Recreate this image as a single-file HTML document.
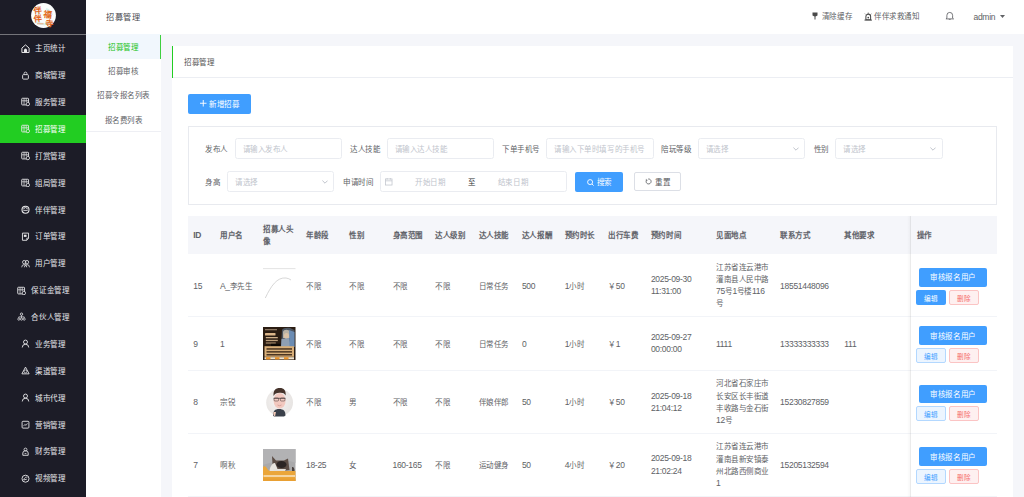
<!DOCTYPE html>
<html lang="zh-CN"><head><meta charset="utf-8"><title>招募管理</title>
<style>
html,body{margin:0;padding:0;}
body{width:1024px;height:497px;overflow:hidden;position:relative;background:#f5f6fa;font-family:"Liberation Sans", sans-serif;}
.r{position:absolute;}
.t{position:absolute;white-space:nowrap;letter-spacing:0.55px;}
.a{font-size:8.5px;letter-spacing:-0.3px;line-height:0;}
</style></head><body>
<div class="r" style="left:0.00px;top:0.00px;width:86.00px;height:497.00px;background:#1c1c27"></div>
<svg class="r" style="left:31px;top:2.6px" width="25" height="25" viewBox="0 0 25 25">
<circle cx="12.5" cy="12.5" r="12.4" fill="#fbfdfd"/>
<path d="M4 9 C6 8 8 10 9 12 M15 6 C18 7 20 9 21 12 M5 19 C9 21 14 22 19 20" stroke="#d9f1ef" stroke-width="2.2" fill="none"/>
<text x="2.2" y="10.2" font-size="8.2" fill="#e2671c" font-weight="bold" transform="rotate(-8 6 7)">伴</text>
<text x="2.8" y="18.6" font-size="8.2" fill="#e2671c" font-weight="bold" transform="rotate(-6 6 15)">伴</text>
<text x="12.6" y="14.2" font-size="8.6" fill="#e06a20" font-weight="bold" transform="rotate(8 16 11)">福</text>
<text x="14.4" y="23.6" font-size="8.2" fill="#e06a20" font-weight="bold" transform="rotate(6 18 20)">寺</text>
<path d="M6 20.8 H12.5" stroke="#f0a070" stroke-width="0.9"/>
</svg>
<div class="r" style="left:0.00px;top:34.30px;width:86.00px;height:1.00px;background:#74747a"></div>
<svg class="r" style="left:21.20px;top:43.70px" width="9" height="9.4" viewBox="0 0 10 10"><path d="M1 4.3 L5 0.8 L9 4.3 V9.2 H1 Z" fill="none" stroke="#e8e8ea" stroke-width="1.1" stroke-linejoin="round"/><path d="M3.3 9.2 V6.6 a1.7 1.7 0 0 1 3.4 0 V9.2 Z" fill="#e8e8ea"/></svg>
<div class="t" style="left:35.20px;top:44.25px;font-size:7.5px;line-height:10.5px;color:#e6e6ea;font-weight:normal;">主页统计</div>
<svg class="r" style="left:21.20px;top:70.58px" width="9" height="9.4" viewBox="0 0 10 10"><rect x="1.8" y="3.8" width="6.4" height="5" rx="1" fill="none" stroke="#e8e8ea" stroke-width="1"/><path d="M3.4 3.8 V2.6 a1.6 1.6 0 0 1 3.2 0 V3.8" fill="none" stroke="#e8e8ea" stroke-width="0.9"/></svg>
<div class="t" style="left:35.20px;top:71.12px;font-size:7.5px;line-height:10.5px;color:#e6e6ea;font-weight:normal;">商城管理</div>
<svg class="r" style="left:21.20px;top:97.45px" width="9" height="9.4" viewBox="0 0 10 10"><rect x="0.8" y="1.2" width="7.6" height="7.4" rx="0.8" fill="none" stroke="#e8e8ea" stroke-width="1"/><path d="M3.4 1.5 V8.4 M5.8 1.5 V5.5 M1 4 H8" stroke="#e8e8ea" stroke-width="0.8"/><circle cx="7.6" cy="7.6" r="1.9" fill="#1c1c27" stroke="#e8e8ea" stroke-width="0.9"/></svg>
<div class="t" style="left:35.20px;top:98.00px;font-size:7.5px;line-height:10.5px;color:#e6e6ea;font-weight:normal;">服务管理</div>
<div class="r" style="left:0.00px;top:115.33px;width:86.00px;height:27.20px;background:#22cd22"></div>
<svg class="r" style="left:21.20px;top:124.33px" width="9" height="9.4" viewBox="0 0 10 10"><rect x="0.8" y="1.2" width="7.6" height="7.4" rx="0.8" fill="none" stroke="#e8e8ea" stroke-width="1"/><path d="M3.4 1.5 V8.4 M5.8 1.5 V5.5 M1 4 H8" stroke="#e8e8ea" stroke-width="0.8"/><circle cx="7.6" cy="7.6" r="1.9" fill="#22cd22" stroke="#e8e8ea" stroke-width="0.9"/></svg>
<div class="t" style="left:35.20px;top:124.88px;font-size:7.5px;line-height:10.5px;color:#ffffff;font-weight:normal;">招募管理</div>
<svg class="r" style="left:21.20px;top:151.20px" width="9" height="9.4" viewBox="0 0 10 10"><rect x="0.8" y="1.2" width="7.6" height="7.4" rx="0.8" fill="none" stroke="#e8e8ea" stroke-width="1"/><path d="M3.4 1.5 V8.4 M5.8 1.5 V5.5 M1 4 H8" stroke="#e8e8ea" stroke-width="0.8"/><circle cx="7.6" cy="7.6" r="1.9" fill="#1c1c27" stroke="#e8e8ea" stroke-width="0.9"/></svg>
<div class="t" style="left:35.20px;top:151.75px;font-size:7.5px;line-height:10.5px;color:#e6e6ea;font-weight:normal;">打赏管理</div>
<svg class="r" style="left:21.20px;top:178.08px" width="9" height="9.4" viewBox="0 0 10 10"><rect x="0.8" y="1.2" width="7.6" height="7.4" rx="0.8" fill="none" stroke="#e8e8ea" stroke-width="1"/><path d="M3.4 1.5 V8.4 M5.8 1.5 V5.5 M1 4 H8" stroke="#e8e8ea" stroke-width="0.8"/><circle cx="7.6" cy="7.6" r="1.9" fill="#1c1c27" stroke="#e8e8ea" stroke-width="0.9"/></svg>
<div class="t" style="left:35.20px;top:178.62px;font-size:7.5px;line-height:10.5px;color:#e6e6ea;font-weight:normal;">组局管理</div>
<svg class="r" style="left:21.20px;top:204.95px" width="9" height="9.4" viewBox="0 0 10 10"><circle cx="5" cy="5" r="3.9" fill="none" stroke="#e8e8ea" stroke-width="1.2"/><path d="M3 4.6 a2 2 0 0 1 4 0" fill="none" stroke="#e8e8ea" stroke-width="1"/><path d="M2.6 5.8 H7.4" stroke="#e8e8ea" stroke-width="0.9"/></svg>
<div class="t" style="left:35.20px;top:205.50px;font-size:7.5px;line-height:10.5px;color:#e6e6ea;font-weight:normal;">伴伴管理</div>
<svg class="r" style="left:21.20px;top:231.83px" width="9" height="9.4" viewBox="0 0 10 10"><path d="M1.6 1 H8.4 V6.6 L6.4 9 H1.6 Z" fill="none" stroke="#e8e8ea" stroke-width="1" stroke-linejoin="round"/><rect x="3.2" y="2.8" width="3" height="2.4" fill="#e8e8ea"/><path d="M6.4 9 V6.6 H8.4" fill="none" stroke="#e8e8ea" stroke-width="0.8"/></svg>
<div class="t" style="left:35.20px;top:232.38px;font-size:7.5px;line-height:10.5px;color:#e6e6ea;font-weight:normal;">订单管理</div>
<svg class="r" style="left:21.20px;top:258.70px" width="9" height="9.4" viewBox="0 0 10 10"><circle cx="3.6" cy="3.3" r="1.9" fill="none" stroke="#e8e8ea" stroke-width="0.9"/><circle cx="6.6" cy="3.3" r="1.9" fill="none" stroke="#e8e8ea" stroke-width="0.9"/><path d="M0.8 9 a2.8 3 0 0 1 5.6 0 M3.8 9 a2.8 3 0 0 1 5.6 0" fill="none" stroke="#e8e8ea" stroke-width="0.9"/></svg>
<div class="t" style="left:35.20px;top:259.25px;font-size:7.5px;line-height:10.5px;color:#e6e6ea;font-weight:normal;">用户管理</div>
<svg class="r" style="left:17.45px;top:285.57px" width="9" height="9.4" viewBox="0 0 10 10"><rect x="0.8" y="1.2" width="7.6" height="7.4" rx="0.8" fill="none" stroke="#e8e8ea" stroke-width="1"/><path d="M3.4 1.5 V8.4 M5.8 1.5 V5.5 M1 4 H8" stroke="#e8e8ea" stroke-width="0.8"/><circle cx="7.6" cy="7.6" r="1.9" fill="#1c1c27" stroke="#e8e8ea" stroke-width="0.9"/></svg>
<div class="t" style="left:31.45px;top:286.12px;font-size:7.5px;line-height:10.5px;color:#e6e6ea;font-weight:normal;">保证金管理</div>
<svg class="r" style="left:17.45px;top:312.45px" width="9" height="9.4" viewBox="0 0 10 10"><circle cx="5" cy="2.2" r="1.3" fill="none" stroke="#e8e8ea" stroke-width="0.9"/><path d="M5 3.5 V5.2 M2 5.2 H8 M2 5.2 V6.4 M8 5.2 V6.4 M5 5.2 V6.4" stroke="#e8e8ea" stroke-width="0.8"/><circle cx="2" cy="7.7" r="1.2" fill="none" stroke="#e8e8ea" stroke-width="0.8"/><circle cx="5" cy="7.7" r="1.2" fill="none" stroke="#e8e8ea" stroke-width="0.8"/><circle cx="8" cy="7.7" r="1.2" fill="none" stroke="#e8e8ea" stroke-width="0.8"/></svg>
<div class="t" style="left:31.45px;top:313.00px;font-size:7.5px;line-height:10.5px;color:#e6e6ea;font-weight:normal;">合伙人管理</div>
<svg class="r" style="left:21.20px;top:339.32px" width="9" height="9.4" viewBox="0 0 10 10"><circle cx="5" cy="3.2" r="2.2" fill="none" stroke="#e8e8ea" stroke-width="1"/><path d="M1.4 9.2 a3.6 3.6 0 0 1 7.2 0" fill="none" stroke="#e8e8ea" stroke-width="1"/></svg>
<div class="t" style="left:35.20px;top:339.88px;font-size:7.5px;line-height:10.5px;color:#e6e6ea;font-weight:normal;">业务管理</div>
<svg class="r" style="left:21.20px;top:366.20px" width="9" height="9.4" viewBox="0 0 10 10"><path d="M5 1 L9 8.5 H1 Z" fill="none" stroke="#e8e8ea" stroke-width="1" stroke-linejoin="round"/><circle cx="5" cy="5.8" r="1.6" fill="none" stroke="#e8e8ea" stroke-width="0.8"/></svg>
<div class="t" style="left:35.20px;top:366.75px;font-size:7.5px;line-height:10.5px;color:#e6e6ea;font-weight:normal;">渠道管理</div>
<svg class="r" style="left:21.20px;top:393.07px" width="9" height="9.4" viewBox="0 0 10 10"><circle cx="5" cy="3.2" r="2.2" fill="none" stroke="#e8e8ea" stroke-width="1"/><path d="M1.4 9.2 a3.6 3.6 0 0 1 7.2 0" fill="none" stroke="#e8e8ea" stroke-width="1"/></svg>
<div class="t" style="left:35.20px;top:393.62px;font-size:7.5px;line-height:10.5px;color:#e6e6ea;font-weight:normal;">城市代理</div>
<svg class="r" style="left:21.20px;top:419.95px" width="9" height="9.4" viewBox="0 0 10 10"><rect x="1.2" y="1.2" width="7.6" height="7.6" rx="1" fill="none" stroke="#e8e8ea" stroke-width="1"/><path d="M2.8 6.6 L4.3 4.6 L5.6 5.8 L7.2 3.4" fill="none" stroke="#e8e8ea" stroke-width="0.8"/></svg>
<div class="t" style="left:35.20px;top:420.50px;font-size:7.5px;line-height:10.5px;color:#e6e6ea;font-weight:normal;">营销管理</div>
<svg class="r" style="left:21.20px;top:446.82px" width="9" height="9.4" viewBox="0 0 10 10"><circle cx="5" cy="2.6" r="1.6" fill="none" stroke="#e8e8ea" stroke-width="0.9"/><path d="M2 9 V6.5 a3 2.6 0 0 1 6 0 V9 Z" fill="none" stroke="#e8e8ea" stroke-width="1"/><path d="M4 7 H6" stroke="#e8e8ea" stroke-width="0.8"/></svg>
<div class="t" style="left:35.20px;top:447.38px;font-size:7.5px;line-height:10.5px;color:#e6e6ea;font-weight:normal;">财务管理</div>
<svg class="r" style="left:21.20px;top:473.70px" width="9" height="9.4" viewBox="0 0 10 10"><circle cx="5" cy="5" r="3.9" fill="none" stroke="#e8e8ea" stroke-width="1"/><path d="M3 6.5 C4 3 6 3 7 3.5 M3 6.5 L6.5 5.5" fill="none" stroke="#e8e8ea" stroke-width="0.9"/></svg>
<div class="t" style="left:35.20px;top:474.25px;font-size:7.5px;line-height:10.5px;color:#e6e6ea;font-weight:normal;">视频管理</div>
<div class="r" style="left:86.00px;top:0.00px;width:75.30px;height:497.00px;background:#ffffff"></div>
<div class="t" style="left:86.00px;width:75px;text-align:center;top:11.66px;font-size:8.2px;line-height:11.479999999999999px;color:#484a50;font-weight:normal;">招募管理</div>
<div class="r" style="left:86.00px;top:34.20px;width:75.00px;height:24.60px;background:#f1f7fd"></div>
<div class="r" style="left:159.80px;top:35.00px;width:1.40px;height:23.80px;background:#3fcf3f"></div>
<div class="r" style="left:161.10px;top:0.00px;width:0.60px;height:34.00px;background:#f4f4f6"></div>
<div class="t" style="left:86.00px;width:75px;text-align:center;top:42.95px;font-size:7.5px;line-height:10.5px;color:#22c322;font-weight:normal;">招募管理</div>
<div class="t" style="left:86.00px;width:75px;text-align:center;top:66.95px;font-size:7.5px;line-height:10.5px;color:#606266;font-weight:normal;">招募审核</div>
<div class="t" style="left:86.00px;width:75px;text-align:center;top:91.25px;font-size:7.5px;line-height:10.5px;color:#606266;font-weight:normal;">招募令报名列表</div>
<div class="t" style="left:86.00px;width:75px;text-align:center;top:115.55px;font-size:7.5px;line-height:10.5px;color:#606266;font-weight:normal;">报名费列表</div>
<div class="r" style="left:86.00px;top:131.00px;width:75.00px;height:0.80px;background:#eeeff4"></div>
<div class="r" style="left:161.30px;top:0.00px;width:862.70px;height:34.00px;background:#ffffff"></div>
<svg class="r" style="left:812px;top:12px" width="6" height="8" viewBox="0 0 6 8"><path d="M0.5 0.5 H5.5 V3.5 L3.5 4.5 V7.5 H2.5 V4.5 L0.5 3.5 Z" fill="#4a4a4a"/></svg>
<div class="t" style="left:821.90px;top:12.15px;font-size:7.5px;line-height:10.5px;color:#606266;font-weight:normal;">清除缓存</div>
<svg class="r" style="left:863.5px;top:11.5px" width="8.5" height="9" viewBox="0 0 9 9"><path d="M2 8 V4.5 a2.5 2.5 0 0 1 5 0 V8 Z" fill="none" stroke="#4a4a4a" stroke-width="1.1"/><path d="M0.5 8.3 H8.5" stroke="#4a4a4a" stroke-width="1"/><path d="M4.5 0.3 V1.6 M1 1.5 L1.8 2.3 M8 1.5 L7.2 2.3" stroke="#4a4a4a" stroke-width="0.8"/><circle cx="4.5" cy="5.6" r="0.9" fill="#4a4a4a"/></svg>
<div class="t" style="left:874.00px;top:12.15px;font-size:7.5px;line-height:10.5px;color:#606266;font-weight:normal;">伴伴求救通知</div>
<svg class="r" style="left:944.9px;top:10.8px" width="9.5" height="9.5" viewBox="0 0 10 10"><path d="M2 7.5 V4.5 a3 3 0 0 1 6 0 V7.5 L9 8.3 H1 Z" fill="none" stroke="#606266" stroke-width="0.9" stroke-linejoin="round"/><path d="M4 9.2 H6" stroke="#606266" stroke-width="0.9"/></svg>
<div class="t" style="left:973.50px;top:11.66px;font-size:8.2px;line-height:11.479999999999999px;color:#606266;font-weight:normal;"><span class="a">admin</span></div>
<svg class="r" style="left:999.8px;top:14.8px" width="5" height="3" viewBox="0 0 5 3"><path d="M0 0 H5 L2.5 3 Z" fill="#606266"/></svg>
<div class="r" style="left:171.80px;top:45.70px;width:841.50px;height:460.00px;background:#ffffff"></div>
<div class="r" style="left:171.80px;top:77.30px;width:841.50px;height:0.80px;background:#eceef3"></div>
<div class="r" style="left:171.80px;top:45.80px;width:1.70px;height:32.00px;background:#22cd22"></div>
<div class="t" style="left:184.30px;top:57.65px;font-size:7.5px;line-height:10.5px;color:#555555;font-weight:normal;">招募管理</div>
<div class="r" style="left:188.00px;top:94.30px;width:62.80px;height:19.30px;background:#409eff;border-radius:2px"></div>
<svg class="r" style="left:200px;top:100.4px" width="6.5" height="6.5" viewBox="0 0 7 7"><path d="M3.5 0 V7 M0 3.5 H7" stroke="#fff" stroke-width="1"/></svg>
<div class="t" style="left:209.30px;top:99.95px;font-size:7.5px;line-height:10.5px;color:#ffffff;font-weight:normal;">新增招募</div>
<div class="r" style="left:187.80px;top:126.20px;width:809.10px;height:78.80px;border:0.8px solid #e8eaef;box-sizing:border-box"></div>
<div class="t" style="left:205.40px;top:144.75px;font-size:7.5px;line-height:10.5px;color:#606266;font-weight:normal;">发布人</div>
<div class="r" style="left:234.70px;top:138.10px;width:107.30px;height:21.40px;border:0.8px solid #eaecf1;border-radius:2.5px;box-sizing:border-box;background:#fff"></div><div class="t" style="left:242.70px;top:144.75px;font-size:7.5px;line-height:10.5px;color:#c0c4cc;font-weight:normal;">请输入发布人</div>
<div class="t" style="left:350.20px;top:144.75px;font-size:7.5px;line-height:10.5px;color:#606266;font-weight:normal;">达人技能</div>
<div class="r" style="left:386.60px;top:138.00px;width:107.60px;height:21.20px;border:0.8px solid #eaecf1;border-radius:2.5px;box-sizing:border-box;background:#fff"></div><div class="t" style="left:394.60px;top:144.55px;font-size:7.5px;line-height:10.5px;color:#c0c4cc;font-weight:normal;">请输入达人技能</div>
<div class="t" style="left:502.00px;top:144.75px;font-size:7.5px;line-height:10.5px;color:#606266;font-weight:normal;">下单手机号</div>
<div class="r" style="left:546.20px;top:138.00px;width:107.60px;height:21.20px;border:0.8px solid #eaecf1;border-radius:2.5px;box-sizing:border-box;background:#fff"></div><div class="t" style="left:554.20px;top:144.55px;font-size:7.5px;line-height:10.5px;color:#c0c4cc;font-weight:normal;">请输入下单时填写的手机号</div>
<div class="t" style="left:661.30px;top:144.75px;font-size:7.5px;line-height:10.5px;color:#606266;font-weight:normal;">陪玩等级</div>
<div class="r" style="left:697.70px;top:138.00px;width:107.70px;height:21.20px;border:0.8px solid #eaecf1;border-radius:2.5px;box-sizing:border-box;background:#fff"></div><div class="t" style="left:705.70px;top:144.55px;font-size:7.5px;line-height:10.5px;color:#c0c4cc;font-weight:normal;">请选择</div><svg class="r" style="left:792.90px;top:146.60px" width="6" height="4" viewBox="0 0 6 4"><path d="M0.4 0.6 L3 3.2 L5.6 0.6" fill="none" stroke="#c0c4cc" stroke-width="1"/></svg>
<div class="t" style="left:813.60px;top:144.75px;font-size:7.5px;line-height:10.5px;color:#606266;font-weight:normal;">性别</div>
<div class="r" style="left:835.40px;top:138.10px;width:107.20px;height:21.30px;border:0.8px solid #eaecf1;border-radius:2.5px;box-sizing:border-box;background:#fff"></div><div class="t" style="left:843.40px;top:144.70px;font-size:7.5px;line-height:10.5px;color:#c0c4cc;font-weight:normal;">请选择</div><svg class="r" style="left:930.10px;top:146.75px" width="6" height="4" viewBox="0 0 6 4"><path d="M0.4 0.6 L3 3.2 L5.6 0.6" fill="none" stroke="#c0c4cc" stroke-width="1"/></svg>
<div class="t" style="left:205.40px;top:177.95px;font-size:7.5px;line-height:10.5px;color:#606266;font-weight:normal;">身高</div>
<div class="r" style="left:227.40px;top:171.20px;width:107.10px;height:21.20px;border:0.8px solid #eaecf1;border-radius:2.5px;box-sizing:border-box;background:#fff"></div><div class="t" style="left:235.40px;top:177.75px;font-size:7.5px;line-height:10.5px;color:#c0c4cc;font-weight:normal;">请选择</div><svg class="r" style="left:322.00px;top:179.80px" width="6" height="4" viewBox="0 0 6 4"><path d="M0.4 0.6 L3 3.2 L5.6 0.6" fill="none" stroke="#c0c4cc" stroke-width="1"/></svg>
<div class="t" style="left:343.20px;top:177.95px;font-size:7.5px;line-height:10.5px;color:#606266;font-weight:normal;">申请时间</div>
<div class="r" style="left:379.50px;top:171.30px;width:187.80px;height:21.10px;border:0.8px solid #eaecf1;border-radius:2.5px;box-sizing:border-box"></div>
<svg class="r" style="left:385.4px;top:178.2px" width="7.5" height="7.5" viewBox="0 0 8 8"><rect x="0.5" y="1" width="7" height="6.5" fill="none" stroke="#c0c4cc" stroke-width="0.8"/><path d="M0.5 3 H7.5 M2.3 0 V1.8 M5.7 0 V1.8" stroke="#c0c4cc" stroke-width="0.8"/></svg>
<div class="t" style="left:415.20px;top:177.95px;font-size:7.5px;line-height:10.5px;color:#c0c4cc;font-weight:normal;">开始日期</div>
<div class="t" style="left:468.30px;top:177.95px;font-size:7.5px;line-height:10.5px;color:#303133;font-weight:normal;">至</div>
<div class="t" style="left:497.90px;top:177.95px;font-size:7.5px;line-height:10.5px;color:#c0c4cc;font-weight:normal;">结束日期</div>
<div class="r" style="left:574.90px;top:172.20px;width:47.80px;height:19.70px;background:#409eff;border-radius:2px"></div>
<svg class="r" style="left:586.7px;top:178.6px" width="7" height="7" viewBox="0 0 7 7"><circle cx="3.1" cy="3.1" r="2.5" fill="none" stroke="#fff" stroke-width="0.9"/><path d="M5 5 L6.6 6.6" stroke="#fff" stroke-width="0.9"/></svg>
<div class="t" style="left:596.70px;top:177.95px;font-size:7.5px;line-height:10.5px;color:#ffffff;font-weight:normal;">搜索</div>
<div class="r" style="left:633.50px;top:172.20px;width:47.50px;height:19.30px;border:0.8px solid #dcdfe6;border-radius:2px;box-sizing:border-box;background:#fff"></div>
<svg class="r" style="left:645.2px;top:178.2px" width="7" height="7" viewBox="0 0 7 7"><path d="M1.5 2.1 A2.5 2.5 0 1 0 3.2 1.0" fill="none" stroke="#606266" stroke-width="0.85"/><path d="M1.3 0.9 V2.3 H2.6" fill="none" stroke="#606266" stroke-width="0.6"/></svg>
<div class="t" style="left:655.10px;top:177.95px;font-size:7.5px;line-height:10.5px;color:#55575c;font-weight:normal;">重置</div>
<div class="r" style="left:187.80px;top:216.10px;width:808.90px;height:37.80px;background:#f5f6fa"></div>
<div class="t" style="left:193.30px;top:231.25px;font-size:7.5px;line-height:10.5px;color:#5f6269;font-weight:bold;"><span class="a">ID</span></div>
<div class="t" style="left:220.00px;top:231.25px;font-size:7.5px;line-height:10.5px;color:#5f6269;font-weight:bold;">用户名</div>
<div class="t" style="left:263px;top:223.80px;font-size:7.5px;line-height:11.7px;color:#5f6269;font-weight:bold">招募人头<br>像</div>
<div class="t" style="left:306.00px;top:231.25px;font-size:7.5px;line-height:10.5px;color:#5f6269;font-weight:bold;">年龄段</div>
<div class="t" style="left:349.00px;top:231.25px;font-size:7.5px;line-height:10.5px;color:#5f6269;font-weight:bold;">性别</div>
<div class="t" style="left:392.50px;top:231.25px;font-size:7.5px;line-height:10.5px;color:#5f6269;font-weight:bold;">身高范围</div>
<div class="t" style="left:435.40px;top:231.25px;font-size:7.5px;line-height:10.5px;color:#5f6269;font-weight:bold;">达人级别</div>
<div class="t" style="left:478.60px;top:231.25px;font-size:7.5px;line-height:10.5px;color:#5f6269;font-weight:bold;">达人技能</div>
<div class="t" style="left:521.90px;top:231.25px;font-size:7.5px;line-height:10.5px;color:#5f6269;font-weight:bold;">达人报酬</div>
<div class="t" style="left:564.80px;top:231.25px;font-size:7.5px;line-height:10.5px;color:#5f6269;font-weight:bold;">预约时长</div>
<div class="t" style="left:608.30px;top:231.25px;font-size:7.5px;line-height:10.5px;color:#5f6269;font-weight:bold;">出行车费</div>
<div class="t" style="left:650.90px;top:231.25px;font-size:7.5px;line-height:10.5px;color:#5f6269;font-weight:bold;">预约时间</div>
<div class="t" style="left:716.00px;top:231.25px;font-size:7.5px;line-height:10.5px;color:#5f6269;font-weight:bold;">见面地点</div>
<div class="t" style="left:780.10px;top:231.25px;font-size:7.5px;line-height:10.5px;color:#5f6269;font-weight:bold;">联系方式</div>
<div class="t" style="left:844.30px;top:231.25px;font-size:7.5px;line-height:10.5px;color:#5f6269;font-weight:bold;">其他要求</div>
<div class="t" style="left:916.50px;top:231.25px;font-size:7.5px;line-height:10.5px;color:#5f6269;font-weight:bold;">操作</div>
<div class="r" style="left:187.80px;top:316.20px;width:808.90px;height:1.00px;background:#f2f4f8"></div>
<div class="t" style="left:193.30px;top:281.85px;font-size:7.5px;line-height:10.5px;color:#606266;font-weight:normal;"><span class="a">15</span></div>
<div class="t" style="left:220.00px;top:281.85px;font-size:7.5px;line-height:10.5px;color:#606266;font-weight:normal;"><span class="a">A_</span>李先生</div>
<div class="t" style="left:306.00px;top:281.85px;font-size:7.5px;line-height:10.5px;color:#606266;font-weight:normal;">不限</div>
<div class="t" style="left:349.00px;top:281.85px;font-size:7.5px;line-height:10.5px;color:#606266;font-weight:normal;">不限</div>
<div class="t" style="left:392.50px;top:281.85px;font-size:7.5px;line-height:10.5px;color:#606266;font-weight:normal;">不限</div>
<div class="t" style="left:435.40px;top:281.85px;font-size:7.5px;line-height:10.5px;color:#606266;font-weight:normal;">不限</div>
<div class="t" style="left:478.60px;top:281.85px;font-size:7.5px;line-height:10.5px;color:#606266;font-weight:normal;">日常任务</div>
<div class="t" style="left:521.90px;top:281.85px;font-size:7.5px;line-height:10.5px;color:#606266;font-weight:normal;"><span class="a">500</span></div>
<div class="t" style="left:564.80px;top:281.85px;font-size:7.5px;line-height:10.5px;color:#606266;font-weight:normal;"><span class="a">1</span>小时</div>
<div class="t" style="left:608.30px;top:281.85px;font-size:7.5px;line-height:10.5px;color:#606266;font-weight:normal;">￥<span class="a">50</span></div>
<div class="t" style="left:650.9px;top:274.05px;font-size:7.5px;line-height:12.15px;color:#606266"><span class="a">2025-09-30</span><br><span class="a">11:31:00</span></div>
<div class="t" style="left:716px;top:262.00px;font-size:7.5px;line-height:12.15px;color:#606266">江苏省连云港市<br>灌南县人民中路<br><span class="a">75</span>号<span class="a">1</span>号楼<span class="a">116</span><br>号</div>
<div class="t" style="left:780.10px;top:281.85px;font-size:7.5px;line-height:10.5px;color:#606266;font-weight:normal;"><span class="a">18551448096</span></div>
<svg class="r" style="left:263.2px;top:267.70px" width="33" height="33" viewBox="0 0 33 33"><path d="M0 0.6 H32.5" stroke="#d8d8d8" stroke-width="0.7"/><path d="M2.3 30 C8 18 14 9 23 10 C25 10.2 26.5 11 28 12" fill="none" stroke="#c6c6c6" stroke-width="0.7"/></svg>
<div class="r" style="left:919.20px;top:268.10px;width:67.40px;height:18.70px;background:#409eff;border-radius:2px"></div>
<div class="t" style="left:919.50px;width:67px;text-align:center;top:273.40px;font-size:7.5px;line-height:10.5px;color:#ffffff;font-weight:normal;">审核报名用户</div>
<div class="r" style="left:916.20px;top:289.80px;width:30.20px;height:14.90px;background:#409eff;border-radius:2px"></div>
<div class="t" style="left:916.30px;width:30px;text-align:center;top:293.83px;font-size:6.6px;line-height:9.239999999999998px;color:#ffffff;font-weight:normal;letter-spacing:0">编辑</div>
<div class="r" style="left:948.80px;top:289.80px;width:29.80px;height:14.90px;background:#fef0f0;border:0.8px solid #fbc4c4;border-radius:2px;box-sizing:border-box"></div>
<div class="t" style="left:948.70px;width:30px;text-align:center;top:293.83px;font-size:6.6px;line-height:9.239999999999998px;color:#f56c6c;font-weight:normal;letter-spacing:0">删除</div>
<div class="r" style="left:187.80px;top:369.80px;width:808.90px;height:1.00px;background:#f2f4f8"></div>
<div class="t" style="left:193.30px;top:340.05px;font-size:7.5px;line-height:10.5px;color:#606266;font-weight:normal;"><span class="a">9</span></div>
<div class="t" style="left:220.00px;top:340.05px;font-size:7.5px;line-height:10.5px;color:#606266;font-weight:normal;"><span class="a">1</span></div>
<div class="t" style="left:306.00px;top:340.05px;font-size:7.5px;line-height:10.5px;color:#606266;font-weight:normal;">不限</div>
<div class="t" style="left:349.00px;top:340.05px;font-size:7.5px;line-height:10.5px;color:#606266;font-weight:normal;">不限</div>
<div class="t" style="left:392.50px;top:340.05px;font-size:7.5px;line-height:10.5px;color:#606266;font-weight:normal;">不限</div>
<div class="t" style="left:435.40px;top:340.05px;font-size:7.5px;line-height:10.5px;color:#606266;font-weight:normal;">不限</div>
<div class="t" style="left:478.60px;top:340.05px;font-size:7.5px;line-height:10.5px;color:#606266;font-weight:normal;">日常任务</div>
<div class="t" style="left:521.90px;top:340.05px;font-size:7.5px;line-height:10.5px;color:#606266;font-weight:normal;"><span class="a">0</span></div>
<div class="t" style="left:564.80px;top:340.05px;font-size:7.5px;line-height:10.5px;color:#606266;font-weight:normal;"><span class="a">1</span>小时</div>
<div class="t" style="left:608.30px;top:340.05px;font-size:7.5px;line-height:10.5px;color:#606266;font-weight:normal;">￥<span class="a">1</span></div>
<div class="t" style="left:650.9px;top:332.25px;font-size:7.5px;line-height:12.15px;color:#606266"><span class="a">2025-09-27</span><br><span class="a">00:00:00</span></div>
<div class="t" style="left:716px;top:339.23px;font-size:7.5px;line-height:12.15px;color:#606266"><span class="a">1111</span></div>
<div class="t" style="left:780.10px;top:340.05px;font-size:7.5px;line-height:10.5px;color:#606266;font-weight:normal;"><span class="a">13333333333</span></div>
<div class="t" style="left:844.30px;top:340.05px;font-size:7.5px;line-height:10.5px;color:#606266;font-weight:normal;"><span class="a">111</span></div>
<svg class="r" style="left:263.2px;top:327.10px" width="32.5" height="33" viewBox="0 0 32.5 33">
<rect width="32.5" height="33" fill="#2a1c12"/>
<rect x="2" y="2" width="12" height="1.3" fill="#8a7560"/>
<path d="M19 3 C20 0.5 27 0 29 2 L31.5 3 V20 H18 Z" fill="#4d5560"/>
<path d="M20 5 C20.5 2 26 2 27 5 L27.5 11 L20 11 Z" fill="#b9b2a6"/>
<ellipse cx="23.5" cy="9" rx="2.6" ry="3" fill="#d9c2a8"/>
<path d="M18.5 12 L26 11 L28 20 H18 Z" fill="#8f9fb3"/>
<path d="M26 3 L31.5 5 V20 H26.5 Z" fill="#6b8cb3"/>
<rect x="2" y="6" width="10.5" height="2.6" rx="0.6" fill="#dcb68a"/>
<rect x="2.8" y="10" width="12" height="1.3" fill="#cfb08b"/>
<rect x="2.8" y="12.8" width="12" height="1.3" fill="#bfa07c"/>
<rect x="2.8" y="15.4" width="10" height="1.2" fill="#a88c6c"/>
<rect x="8" y="16.8" width="9.5" height="2.4" fill="#0c0806"/>
<rect x="1.5" y="19.2" width="29.5" height="10.6" fill="#d8ae78"/>
<rect x="3.5" y="21.2" width="25.5" height="1.5" fill="#4a3522"/>
<rect x="3.5" y="24.1" width="25.5" height="1.5" fill="#4a3522"/>
<rect x="3.5" y="27" width="25.5" height="1.5" fill="#4a3522"/>
<rect x="1.5" y="30.2" width="29.5" height="2.2" fill="#f1e4cf"/>
<rect x="3" y="30.2" width="4.5" height="2.2" fill="#e9922a"/><rect x="12" y="30.2" width="4.5" height="2.2" fill="#e9922a"/><rect x="21" y="30.2" width="4.5" height="2.2" fill="#e9922a"/>
</svg>
<div class="r" style="left:919.20px;top:326.30px;width:67.40px;height:18.70px;background:#409eff;border-radius:2px"></div>
<div class="t" style="left:919.50px;width:67px;text-align:center;top:331.60px;font-size:7.5px;line-height:10.5px;color:#ffffff;font-weight:normal;">审核报名用户</div>
<div class="r" style="left:916.20px;top:348.00px;width:30.20px;height:14.90px;background:#ecf5ff;border:0.8px solid #b3d8ff;border-radius:2px;box-sizing:border-box"></div>
<div class="t" style="left:916.30px;width:30px;text-align:center;top:352.03px;font-size:6.6px;line-height:9.239999999999998px;color:#409eff;font-weight:normal;letter-spacing:0">编辑</div>
<div class="r" style="left:948.80px;top:348.00px;width:29.80px;height:14.90px;background:#fef0f0;border:0.8px solid #fbc4c4;border-radius:2px;box-sizing:border-box"></div>
<div class="t" style="left:948.70px;width:30px;text-align:center;top:352.03px;font-size:6.6px;line-height:9.239999999999998px;color:#f56c6c;font-weight:normal;letter-spacing:0">删除</div>
<div class="r" style="left:187.80px;top:432.70px;width:808.90px;height:1.00px;background:#f2f4f8"></div>
<div class="t" style="left:193.30px;top:398.30px;font-size:7.5px;line-height:10.5px;color:#606266;font-weight:normal;"><span class="a">8</span></div>
<div class="t" style="left:220.00px;top:398.30px;font-size:7.5px;line-height:10.5px;color:#606266;font-weight:normal;">宗锐</div>
<div class="t" style="left:306.00px;top:398.30px;font-size:7.5px;line-height:10.5px;color:#606266;font-weight:normal;">不限</div>
<div class="t" style="left:349.00px;top:398.30px;font-size:7.5px;line-height:10.5px;color:#606266;font-weight:normal;">男</div>
<div class="t" style="left:392.50px;top:398.30px;font-size:7.5px;line-height:10.5px;color:#606266;font-weight:normal;">不限</div>
<div class="t" style="left:435.40px;top:398.30px;font-size:7.5px;line-height:10.5px;color:#606266;font-weight:normal;">不限</div>
<div class="t" style="left:478.60px;top:398.30px;font-size:7.5px;line-height:10.5px;color:#606266;font-weight:normal;">伴娘伴郎</div>
<div class="t" style="left:521.90px;top:398.30px;font-size:7.5px;line-height:10.5px;color:#606266;font-weight:normal;"><span class="a">50</span></div>
<div class="t" style="left:564.80px;top:398.30px;font-size:7.5px;line-height:10.5px;color:#606266;font-weight:normal;"><span class="a">1</span>小时</div>
<div class="t" style="left:608.30px;top:398.30px;font-size:7.5px;line-height:10.5px;color:#606266;font-weight:normal;">￥<span class="a">50</span></div>
<div class="t" style="left:650.9px;top:390.50px;font-size:7.5px;line-height:12.15px;color:#606266"><span class="a">2025-09-18</span><br><span class="a">21:04:12</span></div>
<div class="t" style="left:716px;top:378.45px;font-size:7.5px;line-height:12.15px;color:#606266">河北省石家庄市<br>长安区长丰街道<br>丰收路与金石街<br><span class="a">12</span>号</div>
<div class="t" style="left:780.10px;top:398.30px;font-size:7.5px;line-height:10.5px;color:#606266;font-weight:normal;"><span class="a">15230827859</span></div>
<svg class="r" style="left:263.2px;top:385.35px" width="33" height="33" viewBox="0 0 33 33">
<defs><radialGradient id="ag" cx="0.45" cy="0.45" r="0.6"><stop offset="0" stop-color="#f6f4f3"/><stop offset="1" stop-color="#e6e3e1"/></radialGradient></defs>
<circle cx="16.6" cy="17.4" r="13.4" fill="url(#ag)"/>
<path d="M10 30.5 C10 26 12 24 16 24 C20.5 24 22.5 26 22.5 30.5 L21 31.5 H11 Z" fill="#3a404a"/>
<path d="M10.5 27 C10 29 10.5 31 12 31.5 L13 27 Z" fill="#f0c9b8"/>
<ellipse cx="16.6" cy="15.8" rx="6" ry="7.8" fill="#f2c9c0"/>
<path d="M10.6 11 C10 5.5 12.5 3 16.8 3 C21 3 23.2 5.5 22.6 10.5 C21.5 8 19.5 7.6 16.5 7.8 C13.5 8 11.8 8.6 10.6 11 Z" fill="#45332b"/>
<path d="M10.5 13.3 H22.5" stroke="#3a3030" stroke-width="0.7"/>
<rect x="11" y="13" width="4.6" height="3" rx="1" fill="none" stroke="#3a3030" stroke-width="0.5"/>
<rect x="17.4" y="13" width="4.6" height="3" rx="1" fill="none" stroke="#3a3030" stroke-width="0.5"/>
<path d="M14.5 20 Q16.5 21.5 18.5 20" fill="none" stroke="#c88a80" stroke-width="0.6"/>
</svg>
<div class="r" style="left:919.20px;top:384.55px;width:67.40px;height:18.70px;background:#409eff;border-radius:2px"></div>
<div class="t" style="left:919.50px;width:67px;text-align:center;top:389.85px;font-size:7.5px;line-height:10.5px;color:#ffffff;font-weight:normal;">审核报名用户</div>
<div class="r" style="left:916.20px;top:406.25px;width:30.20px;height:14.90px;background:#ecf5ff;border:0.8px solid #b3d8ff;border-radius:2px;box-sizing:border-box"></div>
<div class="t" style="left:916.30px;width:30px;text-align:center;top:410.28px;font-size:6.6px;line-height:9.239999999999998px;color:#409eff;font-weight:normal;letter-spacing:0">编辑</div>
<div class="r" style="left:948.80px;top:406.25px;width:29.80px;height:14.90px;background:#fef0f0;border:0.8px solid #fbc4c4;border-radius:2px;box-sizing:border-box"></div>
<div class="t" style="left:948.70px;width:30px;text-align:center;top:410.28px;font-size:6.6px;line-height:9.239999999999998px;color:#f56c6c;font-weight:normal;letter-spacing:0">删除</div>
<div class="r" style="left:187.80px;top:495.60px;width:808.90px;height:1.00px;background:#f2f4f8"></div>
<div class="t" style="left:193.30px;top:461.20px;font-size:7.5px;line-height:10.5px;color:#606266;font-weight:normal;"><span class="a">7</span></div>
<div class="t" style="left:220.00px;top:461.20px;font-size:7.5px;line-height:10.5px;color:#606266;font-weight:normal;">啊秋</div>
<div class="t" style="left:306.00px;top:461.20px;font-size:7.5px;line-height:10.5px;color:#606266;font-weight:normal;"><span class="a">18-25</span></div>
<div class="t" style="left:349.00px;top:461.20px;font-size:7.5px;line-height:10.5px;color:#606266;font-weight:normal;">女</div>
<div class="t" style="left:392.50px;top:461.20px;font-size:7.5px;line-height:10.5px;color:#606266;font-weight:normal;"><span class="a">160-165</span></div>
<div class="t" style="left:435.40px;top:461.20px;font-size:7.5px;line-height:10.5px;color:#606266;font-weight:normal;">不限</div>
<div class="t" style="left:478.60px;top:461.20px;font-size:7.5px;line-height:10.5px;color:#606266;font-weight:normal;">运动健身</div>
<div class="t" style="left:521.90px;top:461.20px;font-size:7.5px;line-height:10.5px;color:#606266;font-weight:normal;"><span class="a">50</span></div>
<div class="t" style="left:564.80px;top:461.20px;font-size:7.5px;line-height:10.5px;color:#606266;font-weight:normal;"><span class="a">4</span>小时</div>
<div class="t" style="left:608.30px;top:461.20px;font-size:7.5px;line-height:10.5px;color:#606266;font-weight:normal;">￥<span class="a">20</span></div>
<div class="t" style="left:650.9px;top:453.40px;font-size:7.5px;line-height:12.15px;color:#606266"><span class="a">2025-09-18</span><br><span class="a">21:02:24</span></div>
<div class="t" style="left:716px;top:441.35px;font-size:7.5px;line-height:12.15px;color:#606266">江苏省连云港市<br>灌南县新安镇泰<br>州北路西侧商业<br><span class="a">1</span></div>
<div class="t" style="left:780.10px;top:461.20px;font-size:7.5px;line-height:10.5px;color:#606266;font-weight:normal;"><span class="a">15205132594</span></div>
<svg class="r" style="left:263.2px;top:449.05px" width="32.5" height="32" viewBox="0 0 32.5 32">
<rect width="32.5" height="32" fill="#a9a9ab"/>
<path d="M0 0 H32.5 V14 C25 10 12 12 0 16 Z" fill="#b2b2b4"/>
<path d="M9 7 L13 11.5 L21 11.5 L25 9.5 L26.5 21 L10 23 Z" fill="#5c4d45"/>
<ellipse cx="18.5" cy="15.5" rx="5" ry="3.6" fill="#2c2524"/>
<path d="M6.5 22 C7 17 10 13.5 12 14 L14.5 20 L12 22 Z" fill="#e8e4de"/>
<path d="M10 20 H23 L22 22 H11 Z" fill="#e4e0da"/><path d="M12 22 H22 L21.5 23.5 H12.5 Z" fill="#2a2220"/>
<path d="M29 18 C30.5 17.5 31.5 19 31.5 22 H29 Z" fill="#4a4240"/>
<path d="M0 18 C2 16 4 19 5 21 L7 22 L32.5 22 V32 H0 Z" fill="#eba63a"/>
<rect x="0.5" y="26.2" width="31.5" height="1.6" fill="#f8e2bd"/>
<rect x="0" y="29.5" width="32.5" height="2.5" fill="#e9a033"/>
</svg>
<div class="r" style="left:919.20px;top:447.45px;width:67.40px;height:18.70px;background:#409eff;border-radius:2px"></div>
<div class="t" style="left:919.50px;width:67px;text-align:center;top:452.75px;font-size:7.5px;line-height:10.5px;color:#ffffff;font-weight:normal;">审核报名用户</div>
<div class="r" style="left:916.20px;top:469.15px;width:30.20px;height:14.90px;background:#ecf5ff;border:0.8px solid #b3d8ff;border-radius:2px;box-sizing:border-box"></div>
<div class="t" style="left:916.30px;width:30px;text-align:center;top:473.18px;font-size:6.6px;line-height:9.239999999999998px;color:#409eff;font-weight:normal;letter-spacing:0">编辑</div>
<div class="r" style="left:948.80px;top:469.15px;width:29.80px;height:14.90px;background:#fef0f0;border:0.8px solid #fbc4c4;border-radius:2px;box-sizing:border-box"></div>
<div class="t" style="left:948.70px;width:30px;text-align:center;top:473.18px;font-size:6.6px;line-height:9.239999999999998px;color:#f56c6c;font-weight:normal;letter-spacing:0">删除</div>
<div class="r" style="left:906.50px;top:216.10px;width:4.00px;height:281.00px;background:linear-gradient(to right,rgba(0,0,0,0.0),rgba(0,0,0,0.04))"></div>
<div class="r" style="left:910.20px;top:216.10px;width:0.90px;height:281.00px;background:rgba(0,0,0,0.045)"></div>
</body></html>
